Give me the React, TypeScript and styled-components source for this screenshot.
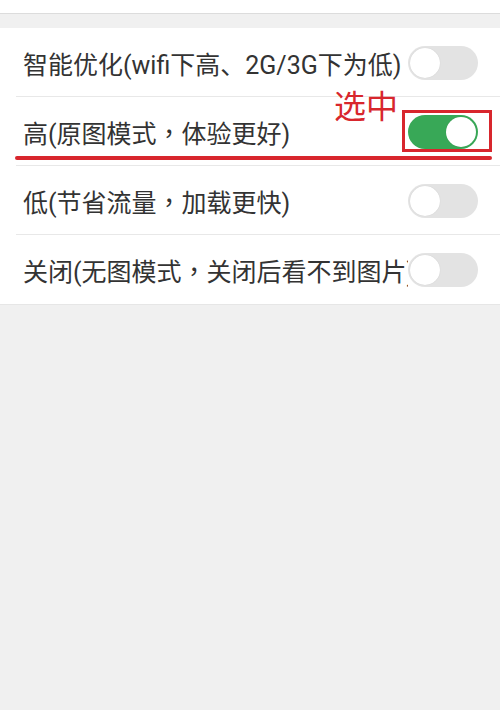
import React from "react";
import styled, { createGlobalStyle } from "styled-components";

const Global = createGlobalStyle`
  html, body { margin: 0; padding: 0; background: #f0f0f0; }
  body { font-family: Roboto, "Noto Sans CJK SC", "Noto Sans", sans-serif; }
`;

const Page = styled.div`
  width: 500px;
  min-height: 710px;
  background: #f0f0f0;
`;

const TopBar = styled.div`
  height: 13px;
  background: #fff;
  border-bottom: 1px solid #dcdcdc;
`;

const List = styled.div`
  margin-top: 14px;
  background: #fff;
  border-bottom: 1px solid #e6e6e6;
`;

const Row = styled.div<{ $last?: boolean }>`
  position: relative;
  height: 69px;
  display: flex;
  align-items: center;
  padding-left: 23px;
  padding-right: 22px;
  box-sizing: border-box;
  &::after {
    content: "";
    display: ${(p) => (p.$last ? "none" : "block")};
    position: absolute;
    left: 16px;
    right: 0;
    bottom: 0;
    height: 1px;
    background: #e8e8e8;
  }
`;

const Label = styled.div`
  flex: 1;
  min-width: 0;
  white-space: nowrap;
  overflow: hidden;
  font-size: 25px;
  color: #333;
`;

const Punct = styled.span`
  font-family: "Noto Sans CJK TC", "Noto Sans CJK SC", sans-serif;
`;

const Track = styled.div<{ $on?: boolean }>`
  flex: none;
  width: 70px;
  height: 34px;
  border-radius: 17px;
  background: ${(p) => (p.$on ? "#38a857" : "#e3e3e3")};
  display: flex;
  align-items: center;
  justify-content: ${(p) => (p.$on ? "flex-end" : "flex-start")};
  padding: 0 2px;
  box-sizing: border-box;
`;

const Knob = styled.div`
  width: 30px;
  height: 30px;
  border-radius: 50%;
  background: #fff;
  box-shadow: 0 0 1px rgba(0, 0, 0, 0.15);
`;

const Note = styled.div`
  position: absolute;
  left: 334px;
  top: -12px;
  font-family: "Noto Sans CJK SC", sans-serif;
  font-size: 32px;
  line-height: 1.2;
  color: #d8262d;
`;

const Box = styled.div`
  position: absolute;
  left: 402px;
  top: 13px;
  width: 90px;
  height: 42px;
  border: 3px solid #d8262d;
  box-sizing: border-box;
`;

const Underline = styled.div`
  position: absolute;
  left: 15px;
  top: 59px;
  width: 477px;
  height: 4px;
  border-radius: 2px;
  background: #d8262d;
`;

const items = [
  { text: "智能优化(wifi下高、2G/3G下为低)", on: false },
  { text: "高(原图模式，体验更好)", on: true, marked: true },
  { text: "低(节省流量，加载更快)", on: false },
  { text: "关闭(无图模式，关闭后看不到图片)", on: false },
];

function renderText(t: string) {
  const parts = t.split("，");
  return parts.map((p, i) => (
    <React.Fragment key={i}>
      {p}
      {i < parts.length - 1 && <Punct>，</Punct>}
    </React.Fragment>
  ));
}

export default function App() {
  return (
    <Page>
      <Global />
      <TopBar />
      <List>
        {items.map((it, i) => (
          <Row key={i} $last={i === items.length - 1}>
            <Label>{renderText(it.text)}</Label>
            <Track $on={it.on}>
              <Knob />
            </Track>
            {it.marked && (
              <>
                <Note>选中</Note>
                <Box />
                <Underline />
              </>
            )}
          </Row>
        ))}
      </List>
    </Page>
  );
}
